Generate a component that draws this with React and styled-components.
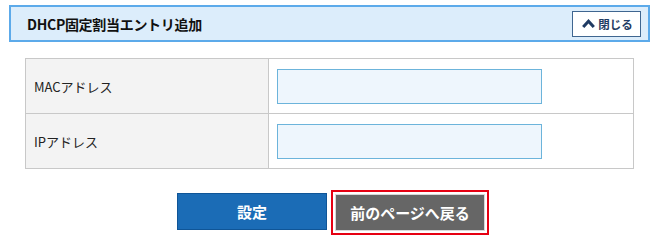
import React from 'react';
import styled, { createGlobalStyle } from 'styled-components';

const GlobalStyle = createGlobalStyle`
  body {
    margin: 0;
    background: #fff;
    font-family: "Noto Sans CJK JP", "Liberation Sans", sans-serif;
  }
`;

const Page = styled.div`
  width: 658px;
  height: 250px;
  padding: 5px 8px 0 9px;
  box-sizing: border-box;
`;

const Header = styled.div`
  display: flex;
  align-items: center;
  justify-content: space-between;
  height: 37px;
  box-sizing: border-box;
  border: 2px solid #5caaea;
  background: #dcedfb;
  padding: 0 7px 0 16px;
  width: 641px;
`;

const Title = styled.h2`
  margin: 0;
  font-size: 14px;
  font-weight: bold;
  color: #111;
  letter-spacing: -0.3px;
`;

const CloseButton = styled.button`
  display: flex;
  align-items: center;
  justify-content: center;
  gap: 3px;
  width: 69px;
  height: 26px;
  box-sizing: border-box;
  background: #fff;
  border: 1px solid #3f6690;
  color: #1f3b63;
  font-family: inherit;
  font-size: 11.5px;
  font-weight: bold;
  padding: 0 0 0 2px;
  cursor: pointer;
`;

const Table = styled.table`
  margin: 16px 0 0 16px;
  width: 609px;
  border-collapse: collapse;
  table-layout: fixed;
`;

const Label = styled.th`
  width: 243px;
  height: 55px;
  box-sizing: border-box;
  background: #f3f3f3;
  border: 1px solid #c8c8c8;
  text-align: left;
  font-weight: normal;
  font-size: 13px;
  color: #222;
  padding: 0 0 0 8px;
`;

const Cell = styled.td`
  border: 1px solid #c8c8c8;
  padding: 0 0 0 8px;
  background: #fff;
`;

const Input = styled.input`
  display: block;
  width: 265px;
  height: 35px;
  box-sizing: border-box;
  background: #eef6fd;
  border: 1px solid #6cb4db;
  outline: none;
`;

const Actions = styled.div`
  display: flex;
  justify-content: center;
  gap: 4px;
  margin-top: 24px;
  padding-left: 7px;
`;

const Button = styled.button`
  width: 150px;
  height: 37px;
  box-sizing: border-box;
  border: 1px solid ${p => p.$border};
  background: ${p => p.$bg};
  color: #fff;
  font-family: inherit;
  font-size: 15px;
  font-weight: bold;
  padding: 0;
`;

const Highlight = styled.div`
  border: 2px solid #e60012;
  padding: 2px;
  margin-top: -3px;
  display: flex;
`;

function ChevronUp() {
  return (
    <svg width="13" height="9" viewBox="0 0 13 9">
      <path d="M1.2 8 L6.5 2.2 L11.8 8" fill="none" stroke="#1f3b63" strokeWidth="3" />
    </svg>
  );
}

export default function App() {
  return (
    <Page>
      <GlobalStyle />
      <Header>
        <Title>DHCP固定割当エントリ追加</Title>
        <CloseButton><ChevronUp />閉じる</CloseButton>
      </Header>
      <Table>
        <tbody>
          <tr>
            <Label>MACアドレス</Label>
            <Cell><Input type="text" /></Cell>
          </tr>
          <tr>
            <Label>IPアドレス</Label>
            <Cell><Input type="text" /></Cell>
          </tr>
        </tbody>
      </Table>
      <Actions>
        <Button $bg="#1b6cb6" $border="#0f5597">設定</Button>
        <Highlight>
          <Button $bg="#666666" $border="#d8d8d8">前のページへ戻る</Button>
        </Highlight>
      </Actions>
    </Page>
  );
}
